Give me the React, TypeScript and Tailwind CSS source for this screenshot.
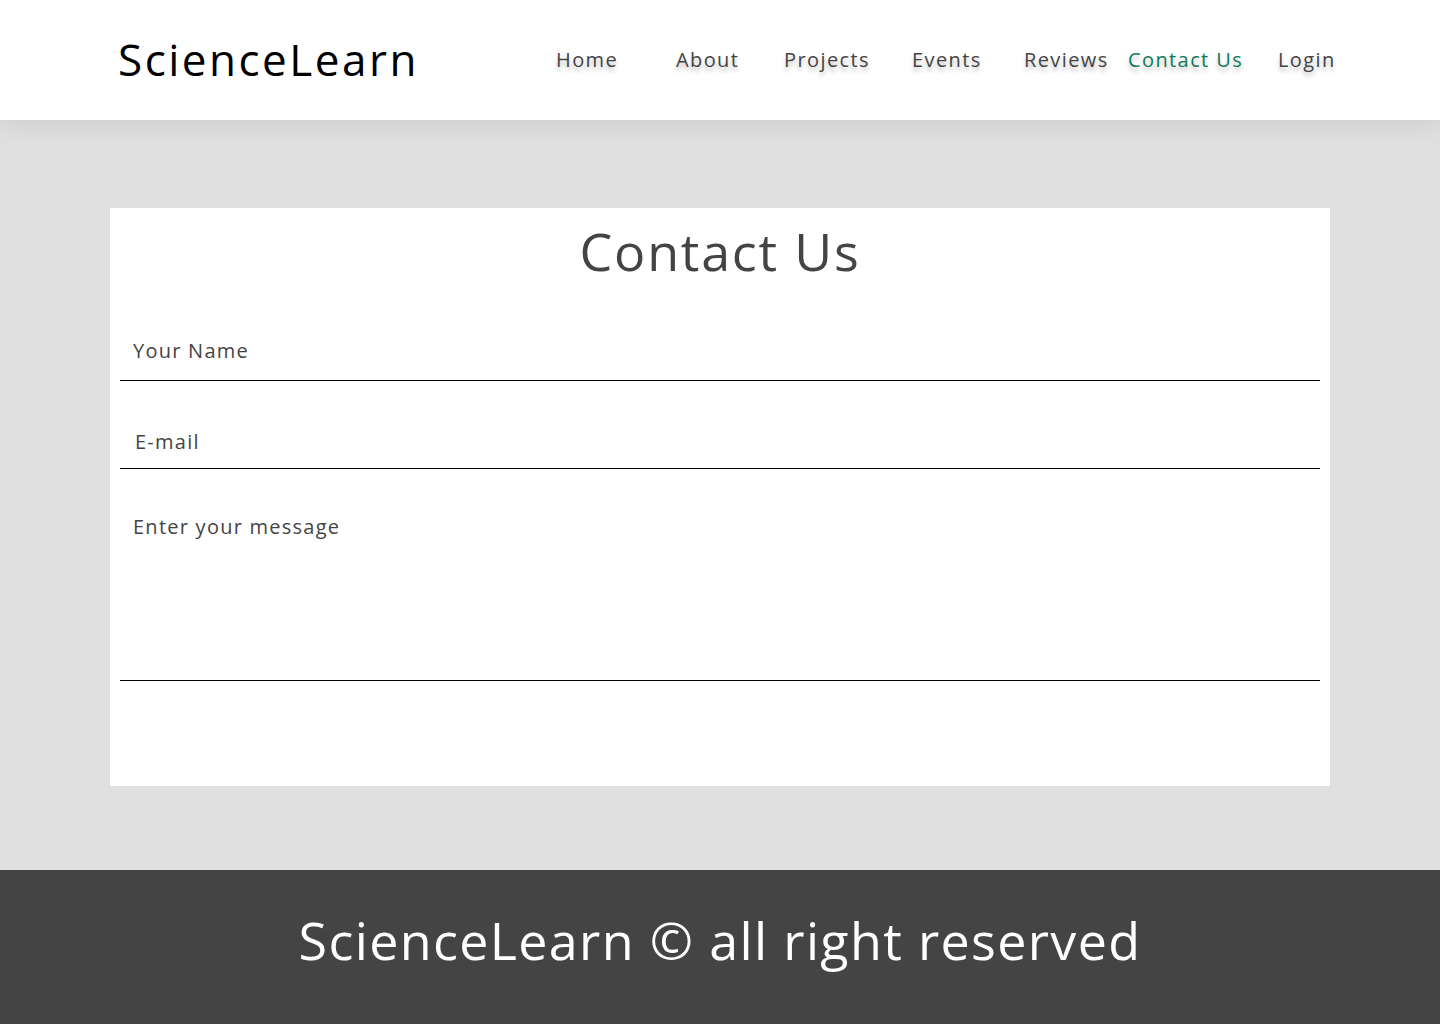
import React from "react";

const font = { fontFamily: '"Open Sans", "Noto Sans", sans-serif' };

export default function App() {
  const links = [
    { label: "Home", w: "w-[61px]", ml: "" },
    { label: "About", w: "w-[62px]", ml: "ml-[59px]" },
    { label: "Projects", w: "w-[84px]", ml: "ml-[46px]" },
    { label: "Events", w: "w-[68px]", ml: "ml-[44px]" },
    { label: "Reviews", w: "w-[84px]", ml: "ml-[44px]" },
    { label: "Contact Us", w: "w-[116px]", ml: "ml-[20px]", active: true },
    { label: "Login", w: "w-[56px]", ml: "ml-[34px]" },
  ];
  const field =
    "w-full border-b border-black outline-none text-[20px] tracking-[1.25px] text-[#444444] placeholder:text-[#444444]";
  return (
    <div className="min-h-screen flex flex-col bg-[#e0e0e0]" style={font}>
      <header className="relative z-10 h-[120px] bg-white shadow-[0_6px_24px_rgba(0,0,0,0.08)] flex items-center pl-[118px] pr-[106px]">
        <div className="text-[44px] leading-none text-black tracking-[2.5px] -mt-[2px] whitespace-nowrap">ScienceLearn</div>
        <nav className="ml-auto flex items-center">
          {links.map((l) => (
            <a
              key={l.label}
              href="#"
              className={`${l.ml} ${l.w} block whitespace-nowrap text-[20px] leading-none tracking-[1.4px] [text-shadow:0_4px_4px_rgba(0,0,0,0.25)] ${
                l.active ? "text-[#0f7a57]" : "text-[#444444]"
              }`}
            >
              {l.label}
            </a>
          ))}
        </nav>
      </header>

      <main className="flex-1 pt-[88px] pb-[84px] px-[110px]">
        <div className="bg-white h-[578px] px-[10px] pt-[18px]">
          <h1 className="text-center text-[52px] leading-[50px] text-[#444444] tracking-[1.8px] font-normal">Contact Us</h1>
          <form className="mt-[47px] flex flex-col">
            <input type="text" placeholder="Your Name" className={`h-[58px] pl-[13px] pt-0 pb-[2px] ${field}`} />
            <input type="email" placeholder="E-mail" className={`mt-[31px] h-[57px] pl-[15px] pt-[3px] ${field}`} />
            <textarea
              placeholder="Enter your message"
              className={`mt-[33px] h-[179px] resize-none pl-[13px] pt-[10px] ${field}`}
            />
          </form>
        </div>
      </main>

      <footer className="h-[154px] bg-[#444444] flex items-center justify-center">
        <p className="text-white text-[52px] leading-none tracking-[1.35px] font-medium -mt-[14px] whitespace-nowrap">
          ScienceLearn © all right reserved
        </p>
      </footer>
    </div>
  );
}
